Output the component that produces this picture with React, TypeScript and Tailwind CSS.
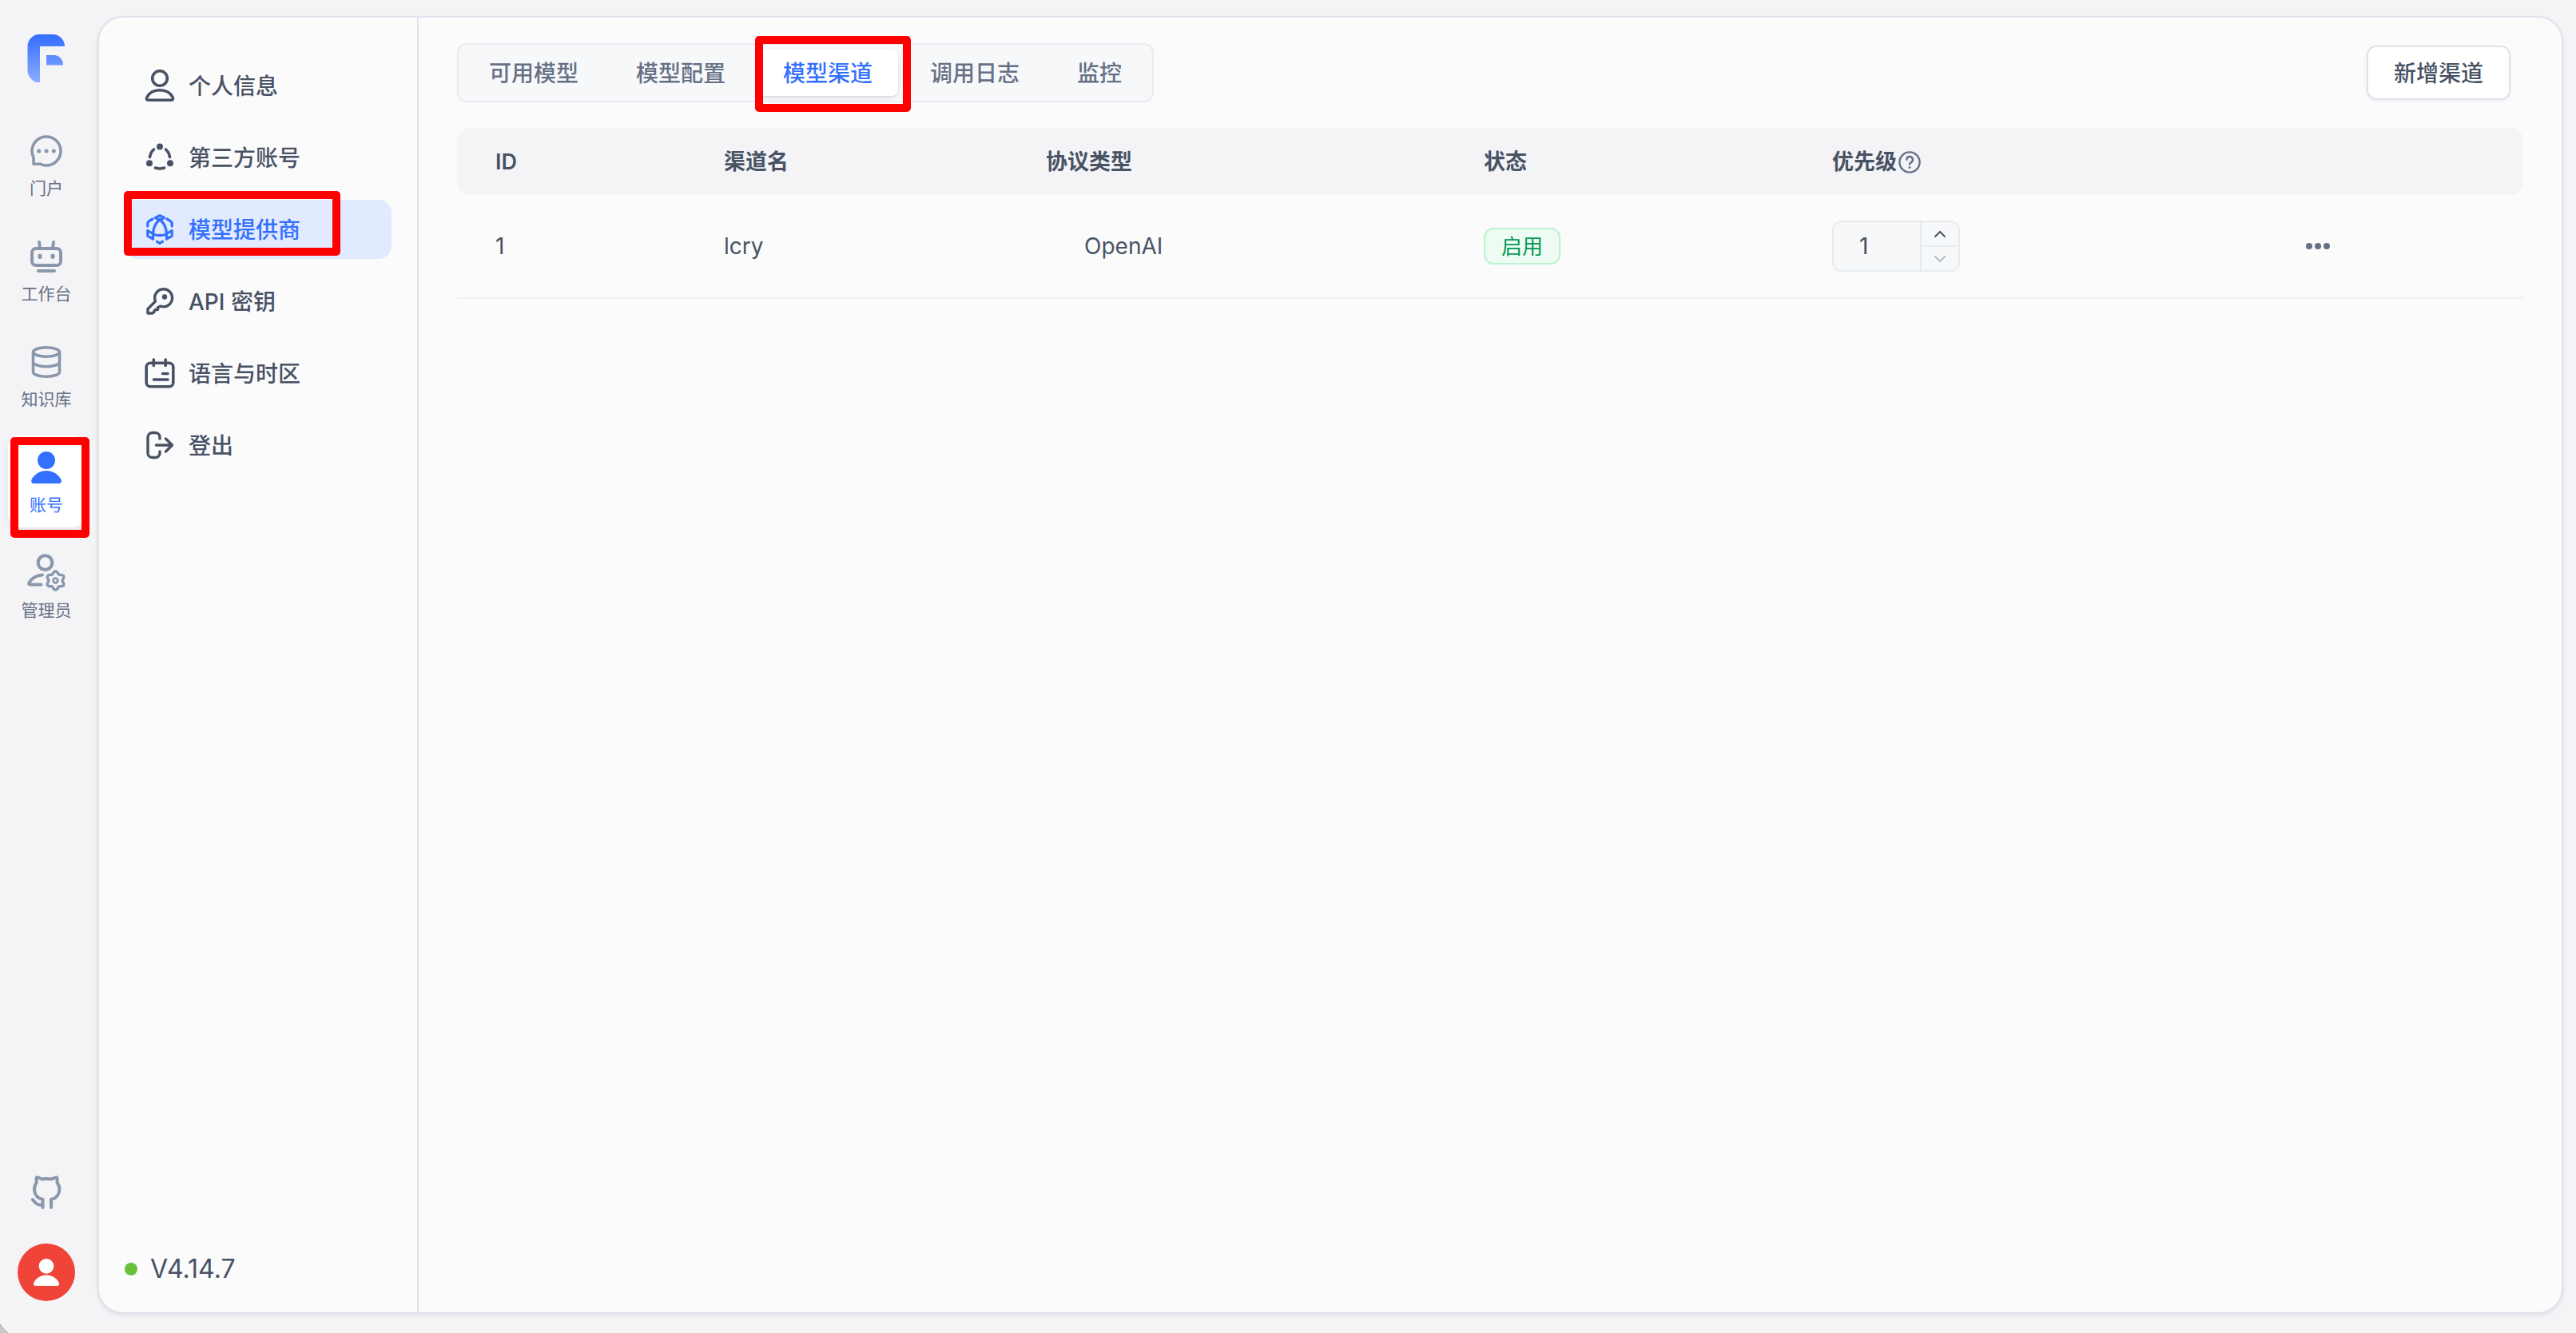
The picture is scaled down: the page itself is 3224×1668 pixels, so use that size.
import { useState } from "react";
import type { ReactNode } from "react";

const stroke = {
  fill: "none",
  stroke: "currentColor",
  strokeLinecap: "round" as const,
  strokeLinejoin: "round" as const,
};

const gearPoints = Array.from({ length: 72 }, (_, i) => {
  const angle = (i / 72) * Math.PI * 2;
  const radius = 10.1 + 1.5 * Math.cos(6 * angle);
  return `${(35.5 + radius * Math.sin(angle)).toFixed(2)},${(33.5 - radius * Math.cos(angle)).toFixed(2)}`;
}).join(" ");

function Logo() {
  return (
    <svg viewBox="0 0 48 60" className="h-[60px] w-12" aria-label="FastGPT" role="img">
      <defs>
        <linearGradient id="brand" x1="0" y1="0" x2="0" y2="1">
          <stop offset="0" stopColor="#326dff" />
          <stop offset="1" stopColor="#8eaeff" />
        </linearGradient>
        <linearGradient id="brandBar" x1="0" y1="0" x2="0" y2="60" gradientUnits="userSpaceOnUse">
          <stop offset="0" stopColor="#326dff" />
          <stop offset="1" stopColor="#8eaeff" />
        </linearGradient>
      </defs>
      <path d="M0.5 15A15 15 0 0 1 15.5 0H32a15 15 0 0 1 15 15H16v45.5A15.5 15.5 0 0 1 0.5 45z" fill="url(#brand)" />
      <path d="M24 26h9.500a11.500 12 0 0 1 11.500 12.500H24z" fill="url(#brandBar)" />
    </svg>
  );
}

function ChatIcon() {
  return (
    <svg viewBox="0 0 40 40" className="size-10" {...stroke} strokeWidth="3.6">
      <path d="M2 20a18 18 0 1 1 18 18c-2.500 0-5-.500-7.200-1.800H4v-8C2.600 25.500 2 22.800 2 20z" />
      <g fill="currentColor" stroke="none">
        <circle cx="10.700" cy="20" r="2.500" />
        <circle cx="20" cy="20" r="2.500" />
        <circle cx="29.300" cy="20" r="2.500" />
      </g>
    </svg>
  );
}

function RobotIcon() {
  return (
    <svg viewBox="0 0 40 40" className="size-10" {...stroke} strokeWidth="4">
      <rect x="2" y="10" width="36" height="21" rx="5" />
      <path d="M11 2l1 7M29 2l-1 7M10 38h20" />
      <g fill="currentColor" stroke="none">
        <rect x="9.500" y="16.500" width="5" height="6.500" rx="2.500" />
        <rect x="25.500" y="16.500" width="5" height="6.500" rx="2.500" />
      </g>
    </svg>
  );
}

function DatabaseIcon() {
  return (
    <svg viewBox="0 0 40 40" className="size-10" {...stroke} strokeWidth="3.6">
      <ellipse cx="20" cy="7.500" rx="16.500" ry="5.700" />
      <path d="M3.500 7.500v25c0 3.200 7.400 5.700 16.500 5.700s16.500-2.500 16.500-5.700v-25M3.500 20c0 3.200 7.400 5.700 16.500 5.700S36.500 23.200 36.500 20" />
    </svg>
  );
}

function UserSolidIcon({ className }: { className: string }) {
  return (
    <svg viewBox="0 0 40 40" className={className} fill="currentColor">
      <circle cx="20" cy="11" r="11" />
      <path d="M20 24c9 0 16 5.500 18.600 11.500.900 2.500-.600 4.500-3 4.500H4.400c-2.400 0-3.900-2-3-4.500C4 29.500 11 24 20 24z" />
    </svg>
  );
}

function AdminIcon() {
  return (
    <svg viewBox="0 0 48 48" className="h-12 w-12" {...stroke} strokeWidth="4">
      <circle cx="22.500" cy="11" r="8.800" />
      <path d="M19 26.500C11 27 5 31.500 2.500 36c-.800 1.700 0 2.500 1.500 2.500h13.500" />
      <polygon points={gearPoints} strokeWidth="3.400" />
      <circle cx="35.500" cy="33.500" r="2.800" strokeWidth="2.800" />
    </svg>
  );
}

function GithubIcon() {
  return (
    <svg viewBox="0 0 40 42" className="h-[42px] w-10" {...stroke} strokeWidth="4">
      <path d="M15.500 40V29.800C8 28.500 5 23 5 17c0-3 .900-5.800 2.700-8C7.300 6.500 7.300 4.200 8 2.200c2.800 0 4.600 1 6.400 2.300 4.400-.800 8-.800 12.400 0C28.600 3.200 30.400 2.200 33.200 2.200c.700 2 .700 4.300.300 6.800 1.800 2.200 2.900 5 2.900 8 0 6-3.500 11.500-10.400 12.800V40" />
      <path d="M15.500 36.500c-7 1-9-2-12.700-6.500" />
    </svg>
  );
}

function UserIcon() {
  return (
    <svg viewBox="0 0 40 40" className="size-10" {...stroke} strokeWidth="3.6">
      <circle cx="20" cy="11" r="9.300" />
      <path d="M20 25.800c7.500 0 13.500 3.700 16.300 9.200.900 2-.100 3.200-1.800 3.200h-29c-1.700 0-2.700-1.200-1.800-3.200C6.500 29.500 12.500 25.800 20 25.800z" />
    </svg>
  );
}

function LinkedIcon() {
  return (
    <svg viewBox="0 0 40 40" className="size-10" {...stroke} strokeWidth="3.6">
      <path d="M12.500 10A16 16 0 0 0 7.500 19.500M27.500 10A16 16 0 0 1 32.500 19.500M14.500 33a16 16 0 0 0 11 0" />
      <g fill="currentColor" stroke="none">
        <circle cx="20" cy="6.500" r="4" />
        <circle cx="7" cy="27.200" r="4" />
        <circle cx="33" cy="27.200" r="4" />
      </g>
    </svg>
  );
}

function ModelIcon() {
  return (
    <svg viewBox="0 0 40 40" className="size-10" {...stroke} strokeWidth="3.2">
      <path d="M14.500 5.500L20 2.800l5.500 2.700L20 8.500z" />
      <path d="M20 7.500c-5 4.500-8.500 11-8.500 18.500 5 2 12 2 17 0C28.500 18.500 25 12 20 7.500z" />
      <path d="M11 7l-4 2.300Q4.800 10.500 4.800 13V16M29 7l4 2.300q2.200 1.200 2.200 3.700V16" />
      <path d="M4.800 21.500v6.700l6.700 4V25.500zM35.200 21.500v6.700l-6.700 4V25.500z" />
      <path d="M16.500 35.300l3.500 2 3.500-2" />
    </svg>
  );
}

function KeyIcon() {
  return (
    <svg viewBox="0 0 40 40" className="size-10" {...stroke} strokeWidth="3.4">
      <path d="M24.500 4.800a11 11 0 1 1-3.500 21.400l-3.500 1.300v3h-3l-1.500 1.500v1.500l-2.500 1.500H5v-5.500L14.500 20A11 11 0 0 1 24.500 4.800z" />
      <circle cx="26" cy="14.500" r="3.200" fill="currentColor" stroke="none" />
    </svg>
  );
}

function CalendarIcon() {
  return (
    <svg viewBox="0 0 40 40" className="size-10" {...stroke} strokeWidth="3.6">
      <rect x="3.200" y="7.200" width="33.600" height="29.600" rx="5" />
      <path d="M12.300 3v7.500M27.200 3v7.500M23.500 20.500h6.500M12.500 28h17.500" />
    </svg>
  );
}

function LogoutIcon() {
  return (
    <svg viewBox="0 0 40 40" className="size-10" {...stroke} strokeWidth="3.400">
      <path d="M20 12V9.500A5.500 5.500 0 0 0 14.500 4.500H10.500A5.500 5.500 0 0 0 5 10V30a5.500 5.500 0 0 0 5.500 5.500h4A5.500 5.500 0 0 0 20 30.500V28M15.500 20H35M27.500 12l8 8-8 8" />
    </svg>
  );
}

function HelpIcon() {
  return (
    <svg viewBox="0 0 28 28" className="size-7 text-[#667085]" {...stroke} strokeWidth="2.400">
      <circle cx="14" cy="14" r="12.600" />
      <path d="M10.300 10.800a3.800 3.800 0 1 1 5.600 3.300c-1.200.700-1.900 1.200-1.900 2.400" />
      <circle cx="14" cy="20.500" r="1.500" fill="currentColor" stroke="none" />
    </svg>
  );
}

function Chevron({ up = false }: { up?: boolean }) {
  return (
    <svg viewBox="0 0 16 10" className="h-[10px] w-4" {...stroke} strokeLinecap="butt" strokeLinejoin="miter" strokeWidth="2">
      <path d={up ? "M1.500 8.500L8 2l6.500 6.500" : "M1.500 1.500L8 8l6.500-6.500"} />
    </svg>
  );
}

function Highlight({ className }: { className: string }) {
  return (
    <span aria-hidden="true" className={`pointer-events-none absolute z-10 rounded-[5px] border-[10px] border-[#ff0000] ${className}`} />
  );
}

const railItems = [
  { label: "门户", icon: <ChatIcon /> },
  { label: "工作台", icon: <RobotIcon /> },
  { label: "知识库", icon: <DatabaseIcon /> },
  { label: "账号", icon: <UserSolidIcon className="size-10" />, active: true },
  { label: "管理员", icon: <AdminIcon /> },
];

const menuItems: { label: string; icon: ReactNode; active?: boolean }[] = [
  { label: "个人信息", icon: <UserIcon /> },
  { label: "第三方账号", icon: <LinkedIcon /> },
  { label: "模型提供商", icon: <ModelIcon />, active: true },
  { label: "API 密钥", icon: <KeyIcon /> },
  { label: "语言与时区", icon: <CalendarIcon /> },
  { label: "登出", icon: <LogoutIcon /> },
];

const tabs = ["可用模型", "模型配置", "模型渠道", "调用日志", "监控"];

function Rail() {
  return (
    <nav className="flex w-[116px] shrink-0 flex-col items-center pt-[43px] pb-10">
      <a href="#home">
        <Logo />
      </a>
      <div className="mt-[45px] flex flex-col gap-4">
        {railItems.map((item) => (
          <a
            key={item.label}
            href="#nav"
            className={`relative flex h-[116px] w-24 flex-col items-center rounded-2xl pt-[21px] text-[21px] leading-[28px] ${
              item.active ? "bg-white text-[#3370ff] shadow-[0_4px_8px_rgba(161,167,179,0.2)]" : "text-[#667085]"
            }`}
          >
            <span className={`flex h-10 items-center justify-center ${item.active ? "text-[#3370ff]" : "text-[#8a97ab]"}`}>{item.icon}</span>
            <span className="mt-[13px]">{item.label}</span>
            {item.active && <Highlight className="top-[3px] left-[3px] h-[126px] w-[99px]" />}
          </a>
        ))}
      </div>
      <a href="#github" aria-label="GitHub" className="mt-auto text-[#8a97ab]">
        <GithubIcon />
      </a>
      <button type="button" aria-label="用户" className="mt-[43px] flex size-[72px] items-center justify-center rounded-full bg-[#f04438] text-white">
        <UserSolidIcon className="size-[34px]" />
      </button>
    </nav>
  );
}

function Sidebar() {
  return (
    <aside className="flex w-[400px] shrink-0 flex-col border-r-2 border-[#dfe2ea] px-8 pt-12 pb-[30px]">
      <nav className="flex flex-col gap-4">
        {menuItems.map((item) => (
          <a
            key={item.label}
            href="#account"
            className={`relative flex h-[74px] items-center gap-4 rounded-2xl px-6 text-[28px] font-medium ${
              item.active ? "bg-[#e1eaff] text-[#3370ff]" : "text-[#485264]"
            }`}
          >
            {item.icon}
            <span className="pt-0.5">{item.label}</span>
            {item.active && <Highlight className="-top-[11px] -left-px h-[81px] w-[271px]" />}
          </a>
        ))}
      </nav>
      <div className="mt-auto flex items-center gap-4 text-[32px] leading-[48px] text-[#485264]">
        <span className="size-4 rounded-full bg-[#67c13b]" />
        V4.14.7
      </div>
    </aside>
  );
}

function PriorityInput() {
  const [value, setValue] = useState(1);
  return (
    <div className="flex h-16 w-40 overflow-hidden rounded-xl border-2 border-[#e8ebf0] bg-[#f7f8fa]">
      <input
        aria-label="优先级"
        inputMode="numeric"
        value={value}
        onChange={(e) => setValue(Number(e.target.value) || 1)}
        className="min-w-0 flex-1 bg-transparent pl-8 text-[28px] outline-none"
      />
      <div className="flex w-12 flex-col border-l-2 border-[#e8ebf0]">
        <button type="button" aria-label="增加" onClick={() => setValue(value + 1)} className="flex flex-1 items-center justify-center border-b-2 border-[#e8ebf0]">
          <Chevron up />
        </button>
        <button type="button" aria-label="减少" onClick={() => setValue(Math.max(1, value - 1))} className="flex flex-1 items-center justify-center text-[#b4bac4]">
          <Chevron />
        </button>
      </div>
    </div>
  );
}

function ChannelTable() {
  return (
    <table className="mt-8 w-full border-separate border-spacing-0 text-left text-[28px] text-[#485264]">
      <thead>
        <tr className="h-[84px] text-[27px] [&>th]:bg-[#f4f4f7] [&>th]:px-12 [&>th]:pt-0.5 [&>th]:font-semibold">
          <th className="w-[286px] rounded-l-2xl">ID</th>
          <th className="w-[403px]">渠道名</th>
          <th className="w-[548px]">协议类型</th>
          <th className="w-[436px]">状态</th>
          <th className="w-[578px]">
            <span className="flex items-center gap-0.5">
              优先级
              <HelpIcon />
            </span>
          </th>
          <th className="w-[335px] rounded-r-2xl" aria-label="操作" />
        </tr>
      </thead>
      <tbody>
        <tr className="h-[130px] [&>td]:border-b-2 [&>td]:border-[#edf1f6] [&>td]:px-12">
          <td>1</td>
          <td>lcry</td>
          <td>
            <span className="pl-12">OpenAI</span>
          </td>
          <td>
            <span className="inline-flex h-[46px] items-center rounded-xl border-2 border-[#b9f4cf] bg-[#edfbf3] px-5 align-middle text-[26px] text-[#039855]">
              启用
            </span>
          </td>
          <td>
            <PriorityInput />
          </td>
          <td>
            <button type="button" aria-label="更多" className="flex size-[60px] items-center justify-center text-[#667085]">
              <svg viewBox="0 0 30 8" className="h-2 w-[30px]" fill="currentColor">
                <circle cx="4" cy="4" r="4" />
                <circle cx="15" cy="4" r="4" />
                <circle cx="26" cy="4" r="4" />
              </svg>
            </button>
          </td>
        </tr>
      </tbody>
    </table>
  );
}

export default function App() {
  const [selected, setSelected] = useState("模型渠道");
  return (
    <div className="relative flex min-h-screen bg-[#f4f4f7] pr-4 font-['Inter','Noto_Sans_CJK_SC',sans-serif]">
      <Rail />
      <div className="mt-5 mb-6 ml-1.5 flex min-w-0 flex-1 rounded-[32px] border-2 border-[#dfe2ea] bg-[#fbfbfc] shadow-[0_2px_4px_rgba(161,167,179,0.25)]">
        <Sidebar />
        <main className="min-w-0 flex-1 px-12 pt-8">
          <div className="flex items-center justify-between pr-4">
            <div role="tablist" className="flex gap-2 rounded-xl border-2 border-[#e8ebf0] bg-[#f7f8fa] p-1.5">
              {tabs.map((tab) => (
                <button
                  key={tab}
                  type="button"
                  role="tab"
                  aria-selected={tab === selected}
                  onClick={() => setSelected(tab)}
                  className={`relative h-[58px] rounded-lg px-8 pt-0.5 text-[28px] font-medium ${
                    tab === selected ? "bg-white text-[#3370ff] shadow-[0_2px_4px_rgba(161,167,179,0.4)]" : "text-[#667085]"
                  }`}
                >
                  {tab}
                  {tab === "模型渠道" && <Highlight className="-top-[17px] -left-[3px] h-[95px] w-[195px]" />}
                </button>
              ))}
            </div>
            <button type="button" className="h-[68px] rounded-xl border-2 border-[#dfe2ea] bg-white px-8 pt-0.5 text-[28px] font-medium text-[#485264] shadow-[0_2px_4px_rgba(161,167,179,0.15)]">
              新增渠道
            </button>
          </div>
          <ChannelTable />
        </main>
      </div>
      <svg aria-hidden="true" viewBox="0 0 10 11" className="absolute bottom-0 left-0 h-[11px] w-[10px]">
        <path d="M0 0Q4 6.500 10 11H0z" fill="#c9c9c9" />
        <path d="M0 0Q4 6.500 10 11" fill="none" stroke="#a3a3a3" />
      </svg>
    </div>
  );
}
